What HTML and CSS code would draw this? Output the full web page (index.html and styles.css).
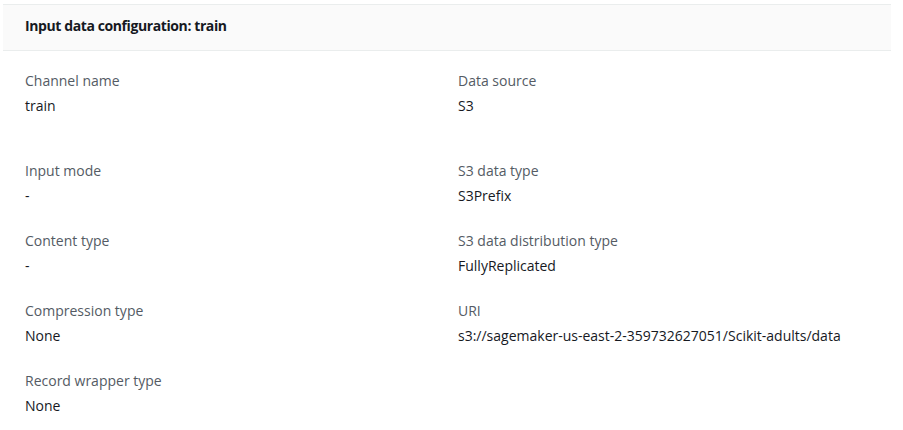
FILE: index.html
```html
<!DOCTYPE html>
<html lang="en">
<head>
<meta charset="utf-8">
<title>Input data configuration: train</title>
<link rel="stylesheet" href="styles.css">
</head>
<body>
<section class="panel">
  <div class="panel-header">
    <h2 class="panel-title">Input data configuration: train</h2>
  </div>
  <div class="panel-body">
    <div class="field first">
      <div class="label">Channel name</div>
      <div class="value">train</div>
    </div>
    <div class="field first">
      <div class="label">Data source</div>
      <div class="value">S3</div>
    </div>
    <div class="field">
      <div class="label">Input mode</div>
      <div class="value">-</div>
    </div>
    <div class="field">
      <div class="label">S3 data type</div>
      <div class="value">S3Prefix</div>
    </div>
    <div class="field">
      <div class="label">Content type</div>
      <div class="value">-</div>
    </div>
    <div class="field">
      <div class="label">S3 data distribution type</div>
      <div class="value">FullyReplicated</div>
    </div>
    <div class="field">
      <div class="label">Compression type</div>
      <div class="value">None</div>
    </div>
    <div class="field">
      <div class="label">URI</div>
      <div class="value">s3://sagemaker-us-east-2-359732627051/Scikit-adults/data</div>
    </div>
    <div class="field">
      <div class="label">Record wrapper type</div>
      <div class="value">None</div>
    </div>
  </div>
</section>
</body>
</html>
```

FILE: styles.css
```css
html, body {
  margin: 0;
  padding: 0;
  background: #ffffff;
}

body {
  padding: 4px 12px 0 3px;
  font-family: "Open Sans", "Noto Sans", Arial, sans-serif;
  font-size: 14px;
  color: #16191f;
}

.panel-header {
  background: #fafafa;
  border-top: 1px solid #eaeded;
  border-bottom: 1px solid #eaeded;
  display: flex;
  align-items: center;
  padding: 0 22px 4px 22px;
  box-sizing: border-box;
  height: 47px;
}

.panel-title {
  margin: 0;
  font-size: 14px;
  font-weight: 700;
  line-height: 20px;
  letter-spacing: -0.4px;
  color: #16191f;
}

.panel-body {
  display: grid;
  grid-template-columns: 1fr 1fr;
  column-gap: 22px;
  row-gap: 25px;
  padding: 20px 22px 0 22px;
}

.field {
  display: flex;
  flex-direction: column;
  gap: 5px;
}

.field.first {
  min-height: 65px;
}

.label {
  line-height: 20px;
  color: #545b64;
}

.value {
  line-height: 20px;
  color: #16191f;
}
```
